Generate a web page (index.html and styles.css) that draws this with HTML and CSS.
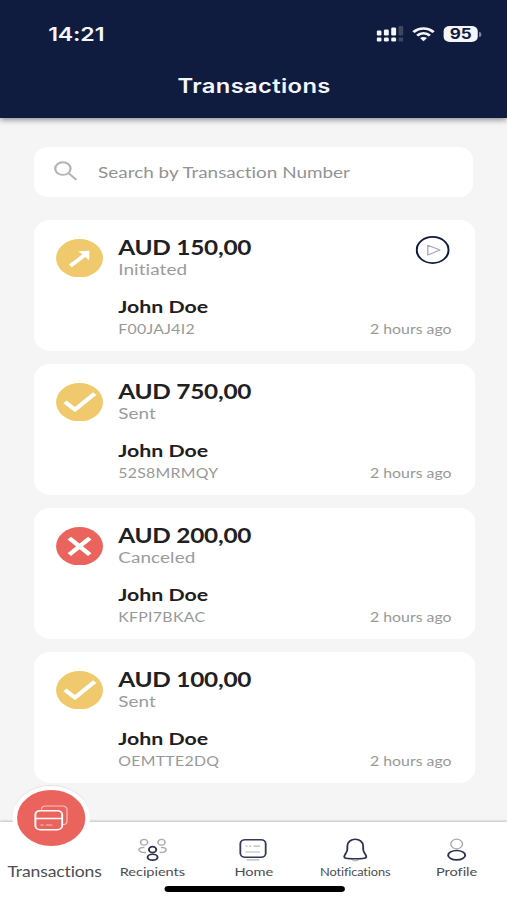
FILE: index.html
```html
<!DOCTYPE html>
<html lang="en">
<head>
<meta charset="utf-8">
<title>Transactions</title>
<link rel="stylesheet" href="styles.css">
</head>
<body>
<div class="phone">
  <header class="header">
    <div class="status">
      <span class="clock">14:21</span>
      <div class="status-icons">
        <svg class="signal" width="22" height="16" viewBox="0 0 22 16" fill="#f4f6fb">
          <rect x="0" y="4.5" width="4" height="5" rx="1.2"/><rect x="6" y="3.5" width="4" height="6" rx="1.2"/><rect x="12" y="1.5" width="4" height="8" rx="1.2"/><rect x="18" y="0" width="4" height="9.5" rx="1.2" opacity=".2"/>
          <rect x="0" y="11.5" width="4" height="4" rx="1.2"/><rect x="6" y="11.5" width="4" height="4" rx="1.2"/><rect x="12" y="11.5" width="4" height="4" rx="1.2"/><rect x="18" y="11.5" width="4" height="4" rx="1.2" opacity=".2"/>
        </svg>
        <svg class="wifi" width="19" height="15" viewBox="0 0 19 15" fill="none" stroke="#f4f6fb" stroke-width="2.5">
          <path d="M1.2 5.2C6 .1 13 .1 17.8 5.2"/><path d="M4.3 8.6C7.2 5.6 11.8 5.6 14.7 8.6"/><path d="M6.6 11.1C8.2 9.6 10.8 9.6 12.4 11.1L9.5 14.2Z" fill="#f4f6fb" stroke="none"/>
        </svg>
        <span class="battery">95</span><span class="battery-tip"></span>
      </div>
    </div>
    <h1 class="title">Transactions</h1>
  </header>

  <main class="content">
    <div class="search">
      <svg width="21" height="21" viewBox="0 0 21 21" fill="none" stroke="#b4b4b4" stroke-width="1.9"><circle cx="7.6" cy="7.6" r="6.3"/><path d="M12.2 12.2L18.7 18.9"/></svg>
      <span class="placeholder">Search by Transaction Number</span>
    </div>

    <section class="card">
      <svg class="badge" viewBox="0 0 38 38"><circle cx="19" cy="19" r="19" fill="#efc96b"/><path d="M11.5 26.5L23.5 15.5" stroke="#fff" stroke-width="3.5"/><path d="M18 12L27 11.5L26.8 21Z" fill="#fff"/></svg>
      <div class="details">
        <div class="amount">AUD 150,00</div>
        <div class="state">Initiated</div>
        <div class="name">John Doe</div>
        <div class="row"><span class="code">F00JAJ4I2</span><span class="ago">2 hours ago</span></div>
      </div>
      <svg class="play" viewBox="0 0 28 28" fill="none"><circle cx="14" cy="14" r="13.1" stroke="#111a3f" stroke-width="1.7"/><path d="M10 9.2L20 14L10 19Z" stroke="#a9a9b2" stroke-width="1.1" stroke-linejoin="round"/></svg>
    </section>

    <section class="card">
      <svg class="badge" viewBox="0 0 38 38"><circle cx="19" cy="19" r="19" fill="#efc96b"/><path d="M7.2 18.6L15.3 26.2L31.3 10.5" stroke="#fff" stroke-width="3.8" fill="none"/></svg>
      <div class="details">
        <div class="amount">AUD 750,00</div>
        <div class="state">Sent</div>
        <div class="name">John Doe</div>
        <div class="row"><span class="code">52S8MRMQY</span><span class="ago">2 hours ago</span></div>
      </div>
    </section>

    <section class="card">
      <svg class="badge" viewBox="0 0 38 38"><circle cx="19" cy="19" r="19" fill="#ea645d"/><path d="M10.7 11L27.3 27.3M27.3 11L10.7 27.3" stroke="#fff" stroke-width="4"/></svg>
      <div class="details">
        <div class="amount">AUD 200,00</div>
        <div class="state">Canceled</div>
        <div class="name">John Doe</div>
        <div class="row"><span class="code">KFPI7BKAC</span><span class="ago">2 hours ago</span></div>
      </div>
    </section>

    <section class="card">
      <svg class="badge" viewBox="0 0 38 38"><circle cx="19" cy="19" r="19" fill="#efc96b"/><path d="M7.2 18.6L15.3 26.2L31.3 10.5" stroke="#fff" stroke-width="3.8" fill="none"/></svg>
      <div class="details">
        <div class="amount">AUD 100,00</div>
        <div class="state">Sent</div>
        <div class="name">John Doe</div>
        <div class="row"><span class="code">OEMTTE2DQ</span><span class="ago">2 hours ago</span></div>
      </div>
    </section>
  </main>

  <nav class="nav">
    <div class="tab active">
      <div class="fab">
        <svg width="28" height="26" viewBox="0 0 28 26" fill="none" stroke="#fff" stroke-linecap="round">
          <path d="M6 5V4.5Q6 1 9.5 1H23Q27 1 27 5V15.5Q27 19.5 24 19.5" stroke-width="1" opacity=".6"/>
          <rect x="1" y="5.7" width="22" height="19" rx="4" stroke-width="1.6"/><path d="M1 13.5H23" stroke-width="1.5"/><path d="M5.5 20H7.5M10 20H14.5" stroke-width="1" opacity=".6"/>
        </svg>
      </div>
      <span class="label">Transactions</span>
    </div>
    <div class="tab">
      <svg class="icon" width="24" height="24" viewBox="0 0 24 24" fill="none" stroke-width="1.3">
        <g stroke="#aaaab0"><circle cx="5.2" cy="4.3" r="2.9"/><circle cx="19.5" cy="4.3" r="2.9"/><path d="M6.700 14.500C3.200 14.600 1 13.600 1 11.800C1 10.200 2.600 9.400 5.500 9.400M18 14.500C21.500 14.600 23.300 13.600 23.300 11.800C23.300 10.200 21.700 9.400 19 9.400"/></g>
        <g stroke="#2c3150" stroke-width="1.6"><circle cx="12.2" cy="11.6" r="3"/><ellipse cx="12.2" cy="19.2" rx="4.1" ry="2.9"/></g>
      </svg>
      <span class="label">Recipients</span>
    </div>
    <div class="tab">
      <svg class="icon" width="24" height="24" viewBox="0 0 24 24" fill="none">
        <rect x="1.2" y="1.7" width="20.8" height="17.6" rx="4" stroke="#343959" stroke-width="1.5"/>
        <path d="M5.5 8.2H7M8.5 8.2H10M12 8.2H17.3M5.5 14H17.3M6.3 21.9H16.8" stroke="#b5b5bd" stroke-width="1.2"/>
      </svg>
      <span class="label">Home</span>
    </div>
    <div class="tab">
      <svg class="icon" width="24" height="24" viewBox="0 0 24 24" fill="none">
        <path d="M8.500 21.400Q11.500 24.400 14.500 21.400" stroke="#b5b5bd" stroke-width="1.3"/>
        <path d="M11.500 1.200C8 1.200 5 4 5 8.200V11.500C5 14 3 15.800 2.500 18.300C2.100 20.300 4.500 20.800 11.500 20.800S20.900 20.300 20.500 18.300C20 15.800 18 14 18 11.500V8.200C18 4 15 1.200 11.500 1.200Z" stroke="#2c3150" stroke-width="1.5"/>
      </svg>
      <span class="label small">Notifications</span>
    </div>
    <div class="tab">
      <svg class="icon" width="24" height="24" viewBox="0 0 24 24" fill="none">
        <circle cx="11.7" cy="6" r="4.8" stroke="#aaaab0" stroke-width="1.2"/><ellipse cx="11.7" cy="17.2" rx="7" ry="4.7" stroke="#2c3150" stroke-width="1.6"/>
      </svg>
      <span class="label">Profile</span>
    </div>
    <div class="home-bar"></div>
  </nav>
</div>
</body>
</html>
```
FILE: styles.css
```css
* { box-sizing: border-box; }
body { margin: 0; width: 507px; height: 900px; overflow: hidden; background: #f5f5f5; }

/* 416px wide layout widened to the full 507px viewport */
.phone {
  width: 416px;
  height: 900px;
  display: flex;
  flex-direction: column;
  transform: scaleX(1.21875);
  transform-origin: 0 0;
  background: #f5f5f5;
  font-family: Lato, "Liberation Sans", sans-serif;
  font-variant-ligatures: none;
}
svg { display: block; flex: none; }

.header {
  height: 118px;
  flex: none;
  background: #101c3f;
  color: #f4f6fb;
  font-family: Inter, "Liberation Sans", sans-serif;
  box-shadow: 0 2px 5px rgba(0, 0, 0, .42);
}
.status { display: flex; justify-content: space-between; padding: 22px 21px 0 39.5px; height: 70px; }
.clock { font-size: 19px; line-height: 25px; font-weight: 600; letter-spacing: -.1px; }
.status-icons { display: flex; height: 24px; align-items: center; }
.signal { margin-right: 7px; }
.wifi { margin-right: 7px; }
.battery {
  width: 28px; height: 16px; border-radius: 5px; background: #f4f6fb; color: #101c3f;
  font-size: 14px; line-height: 16px; font-weight: 700; text-align: center;
}
.battery-tip { width: 2px; height: 5px; margin-left: 1px; border-radius: 0 2px 2px 0; background: #7c849b; }
.title { margin: 4px 0 0; padding-left: 1px; text-align: center; font-size: 19.5px; line-height: 24px; font-weight: 600; letter-spacing: .3px; }

.content { flex: 1; display: flex; flex-direction: column; padding: 28.5px 27px 0 28px; }
.search {
  display: flex; align-items: center; height: 50px; width: 360px; margin-bottom: 23.5px;
  padding-left: 15.5px; gap: 16px; background: #fff; border-radius: 12px;
}
.placeholder { font-size: 15.5px; line-height: 20px; color: #919494; padding-top: 1px; }

.card {
  display: flex; align-items: flex-start; position: relative; height: 130.5px; width: 361.5px;
  margin-bottom: 13.5px; padding: 15.3px 19px 0 18px; background: #fff; border-radius: 14px;
}
.badge { width: 38.5px; height: 38.5px; margin: 3.3px 12.5px 0 0; }
.details { flex: 1; }
.amount { font-size: 20px; line-height: 24px; font-weight: 700; letter-spacing: -.2px; color: #1f2022; }
.state { margin-top: .7px; font-size: 15.5px; line-height: 19px; letter-spacing: .08px; color: #9a9c9c; }
.name { margin-top: 17.3px; font-size: 17.5px; line-height: 22px; font-weight: 700; color: #1f2022; }
.row { display: flex; justify-content: space-between; align-items: baseline; margin-top: 1px; line-height: 20px; color: #979999; }
.code { font-size: 13px; letter-spacing: .25px; }
.ago { font-size: 13px; }
.play { position: absolute; top: 16px; right: 20.5px; width: 28px; height: 28px; }

.nav {
  position: relative; display: grid; grid-template-columns: repeat(5, 1fr); height: 78px; flex: none;
  background: #fff; box-shadow: 0 -1px 2px rgba(0, 0, 0, .22);
}
.tab { display: flex; flex-direction: column; align-items: center; padding-top: 16px; min-width: 0; }
.icon { position: relative; left: .5px; }
.label { margin: 2.2px 0 0 .5px; font-size: 12px; line-height: 16px; letter-spacing: -.05px; color: #4c4e50; white-space: nowrap; }
.label.small { font-size: 10.5px; letter-spacing: -.1px; }
.active { padding-top: 0; }
.fab {
  display: flex; align-items: center; justify-content: center; width: 64px; height: 64px; flex: none;
  margin: -36px 0 0 1.5px; border: 4px solid #fff; border-radius: 50%; background: #ea645d;
  box-shadow: 0 -1px 1px rgba(0, 0, 0, .08);
}
.active .label { margin: 11.8px 0 0 6.5px; font-size: 14.4px; line-height: 20px; letter-spacing: -.1px; }
.home-bar { position: absolute; left: 134.5px; bottom: 8.5px; width: 148px; height: 6px; border-radius: 3px; background: #000; }
```
